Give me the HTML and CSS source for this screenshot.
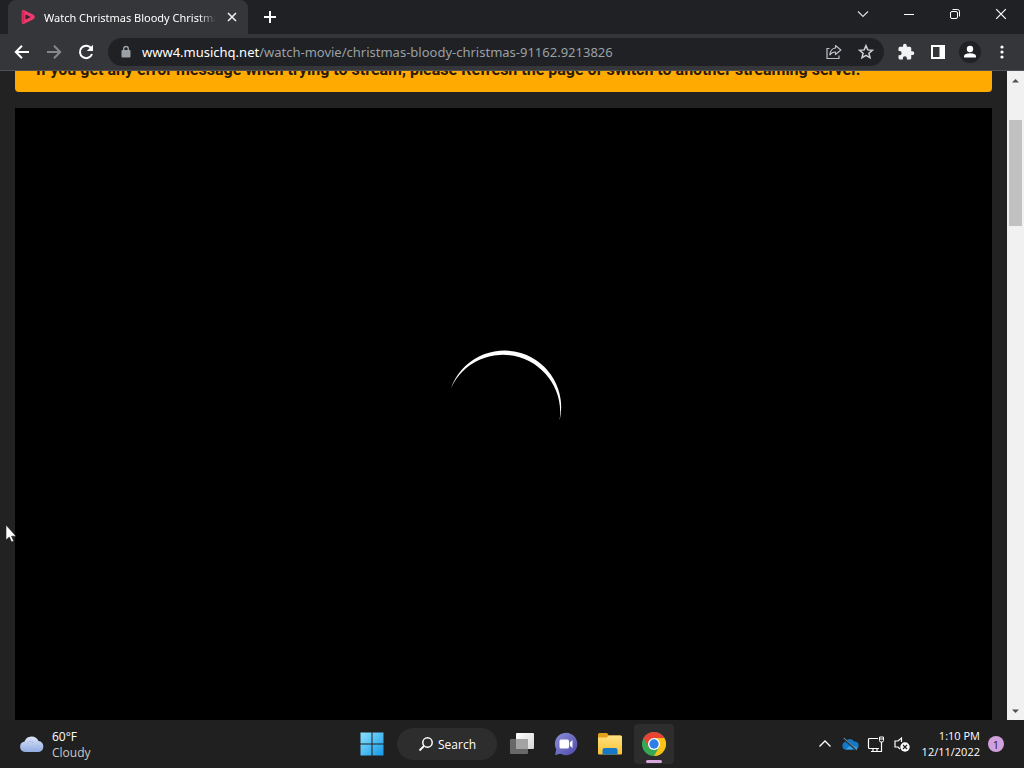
FILE: index.html
```html
<!DOCTYPE html>
<html lang="en">
<head>
  <meta charset="UTF-8" />
  <meta name="viewport" content="width=device-width, initial-scale=1.0"/>
  <title>Watch Christmas Bloody Christmas</title>
  <link rel="stylesheet" href="styles.css">
</head>
<body>
  <!-- Tab strip -->
  <header class="tabstrip">
    <div class="tab">
      <svg class="favicon" width="16" height="16" viewBox="0 0 16 16"><path d="M3.500 2.800 12.600 7.300a.8.8 0 0 1 0 1.400L3.500 13.200z" fill="none" stroke="#ee3a6c" stroke-width="3.600" stroke-linejoin="round"/><path d="M3.400 2.500v11" stroke="#c9285a" stroke-width="2"/><path d="M6 5.500 10.500 8 6 10.500z" fill="#3a2030"/></svg>
      <span class="tab-title">Watch Christmas Bloody Christmas</span>
      <button class="tab-close" aria-label="Close tab">
        <svg width="16" height="16" viewBox="0 0 16 16"><path d="M4 4l8 8M12 4l-8 8" stroke="#e8eaed" stroke-width="1.700"/></svg>
      </button>
    </div>
    <button class="new-tab" aria-label="New tab">
      <svg width="16" height="16" viewBox="0 0 16 16"><path d="M8 2v12M2 8h12" stroke="#fff" stroke-width="2"/></svg>
    </button>
    <div class="window-controls">
      <button aria-label="Search tabs"><svg width="16" height="16" viewBox="0 0 16 16"><path d="M3 5.500l5 5 5-5" fill="none" stroke="#dcdcdc" stroke-width="1.200"/></svg></button>
      <button aria-label="Minimize"><svg width="16" height="16" viewBox="0 0 16 16"><path d="M3 8.500h10" stroke="#fff"/></svg></button>
      <button aria-label="Restore"><svg width="16" height="16" viewBox="0 0 16 16"><rect x="3.500" y="5.500" width="7" height="7" rx="1.500" fill="none" stroke="#fff"/><path d="M5.500 3.500h5a2 2 0 0 1 2 2v5" fill="none" stroke="#fff"/></svg></button>
      <button aria-label="Close"><svg width="16" height="16" viewBox="0 0 16 16"><path d="M3.200 3.200l9.600 9.600M12.800 3.200l-9.600 9.600" stroke="#fff" stroke-width="1.200"/></svg></button>
    </div>
  </header>

  <!-- Toolbar -->
  <nav class="toolbar">
    <button aria-label="Back"><svg width="18" height="18" viewBox="0 0 18 18"><path d="M16 9H3M9 2.800 2.800 9 9 15.200" fill="none" stroke="#fff" stroke-width="2"/></svg></button>
    <button aria-label="Forward"><svg width="18" height="18" viewBox="0 0 18 18"><path d="M2 9h13M9 2.800 15.200 9 9 15.200" fill="none" stroke="#85878a" stroke-width="2"/></svg></button>
    <button aria-label="Reload"><svg width="18" height="18" viewBox="0 0 18 18"><path d="M14.400 5.600A6.200 6.200 0 1 0 15 11" fill="none" stroke="#fff" stroke-width="2"/><path d="M16 1.800V8H9.800z" fill="#fff"/></svg></button>
    <form class="omnibox">
      <svg width="12" height="14" viewBox="0 0 12 14"><rect x="1.500" y="5" width="9" height="7.500" rx="1" fill="#9aa0a6"/><path d="M3.700 5.500V3.800a2.300 2.300 0 0 1 4.600 0v1.700" fill="none" stroke="#9aa0a6" stroke-width="1.400"/></svg>
      <label class="host" for="address">www4.musichq.net</label>
      <input class="address" id="address" type="text" value="/watch-movie/christmas-bloody-christmas-91162.9213826" />
      <button type="button" aria-label="Share"><svg width="18" height="18" viewBox="0 0 18 18"><path d="M4.500 5.500H2v10h12v-3" fill="none" stroke="#bdc1c6" stroke-width="1.200"/><path d="M10.500 2.500 15.800 7l-5.300 4.500V9C8 9 6.200 9.800 4.800 11.800 5.200 8 7.200 5.400 10.500 5z" fill="none" stroke="#bdc1c6" stroke-width="1.200" stroke-linejoin="round"/></svg></button>
      <button type="button" aria-label="Bookmark this tab"><svg width="18" height="18" viewBox="0 0 18 18"><path d="M9 2.700l1.800 4.200 4.600.4-3.500 3 1.100 4.500L9 12.400l-4 2.400 1.100-4.500-3.500-3 4.600-.4z" fill="none" stroke="#d0d3d7" stroke-width="1.500"/></svg></button>
    </form>
    <button aria-label="Extensions"><svg width="18" height="18" viewBox="0 0 24 24"><path d="M20.500 11H19V7a2 2 0 0 0-2-2h-4V3.500a2.500 2.500 0 0 0-5 0V5H4a2 2 0 0 0-2 2v3.800h1.500a2.700 2.700 0 0 1 0 5.400H2V20a2 2 0 0 0 2 2h3.800v-1.500a2.700 2.700 0 0 1 5.400 0V22H17a2 2 0 0 0 2-2v-4h1.500a2.500 2.500 0 0 0 0-5z" fill="#f1f3f4"/></svg></button>
    <button aria-label="Side panel"><svg width="16" height="16" viewBox="0 0 16 16"><path fill-rule="evenodd" d="M1 1h14v14H1zM3 3v10h6.500V3z" fill="#fff"/></svg></button>
    <button class="profile" aria-label="Profile"><svg width="22" height="22" viewBox="0 0 22 22"><circle cx="11" cy="11" r="11" fill="#202124"/><circle cx="11" cy="8" r="3.200" fill="#fff"/><path d="M5 16.500v-1.300C5 13 9 12.200 11 12.200s6 .8 6 3v1.300z" fill="#fff"/></svg></button>
    <button aria-label="Menu"><svg width="16" height="16" viewBox="0 0 16 16"><circle cx="8" cy="3" r="1.600" fill="#fff"/><circle cx="8" cy="8" r="1.600" fill="#fff"/><circle cx="8" cy="13" r="1.600" fill="#fff"/></svg></button>
  </nav>

  <!-- Web page -->
  <div class="viewport">
    <main class="page">
      <div class="alert">If you get any error message when trying to stream, please Refresh the page or switch to another streaming server.</div>
      <div class="player">
        <svg class="spinner" width="116" height="116" viewBox="447 349 116 116"><path d="M452 388A56.780 56.780 0 0 1 560.500 421A57.260 57.260 0 0 0 452 388z" fill="#fff"/></svg>
      </div>
    </main>
    <div class="scrollbar">
      <svg width="17" height="17" viewBox="0 0 17 17"><path d="M5 11.500 8.500 8l3.500 3.500z" fill="#505050"/></svg>
      <div class="track"><div class="thumb"></div></div>
      <svg width="17" height="17" viewBox="0 0 17 17"><path d="M5 6.500 8.500 10 12 6.500z" fill="#505050"/></svg>
    </div>
  </div>

  <!-- Taskbar -->
  <footer class="taskbar">
    <button class="weather">
      <svg width="26" height="18" viewBox="0 0 26 18"><defs><linearGradient id="cloud" x1="0" y1="0" x2="0" y2="1"><stop offset="0" stop-color="#dce6fa"/><stop offset="1" stop-color="#91abe0"/></linearGradient></defs><path d="M6 17a5.300 5.300 0 0 1-.5-10.500A7.500 7.500 0 0 1 19.500 6 5.600 5.600 0 0 1 20 17z" fill="url(#cloud)"/><path d="M8 8.500C10 5.500 13 6 14.500 8" fill="none" stroke="#a9bde8"/></svg>
      <span class="weather-text"><span>60°F</span><span class="condition">Cloudy</span></span>
    </button>
    <div class="apps">
      <button class="app" aria-label="Start"><svg width="24" height="24" viewBox="0 0 24 24"><defs><linearGradient id="win" x1="0" y1="0" x2="1" y2="1"><stop offset="0" stop-color="#8be2ff"/><stop offset="1" stop-color="#1498e6"/></linearGradient></defs><path d="M.5.500h11v11H.5zM12.500.500h11v11h-11zM.5 12.500h11v11H.5zM12.500 12.500h11v11h-11z" fill="url(#win)"/></svg></button>
      <button class="search"><svg width="16" height="16" viewBox="0 0 16 16"><circle cx="9.500" cy="6.500" r="4.700" fill="none" stroke="#fff" stroke-width="1.500"/><path d="M6 10l-4.500 4.500" stroke="#fff" stroke-width="1.800"/></svg>Search</button>
      <button class="app" aria-label="Task view"><svg width="26" height="24" viewBox="0 0 26 24"><defs><linearGradient id="pane" x1="0" y1="0" x2="1" y2="1"><stop offset="0" stop-color="#fff"/><stop offset="1" stop-color="#d6d6d6"/></linearGradient></defs><rect x="1" y="7" width="18" height="15" rx="1" fill="#686868"/><rect x="7" y="1" width="18" height="16" rx="1" fill="url(#pane)"/><path d="M7 7h12v10H7z" fill="#a3a3a3"/></svg></button>
      <button class="app" aria-label="Chat"><svg width="24" height="24" viewBox="0 0 24 24"><defs><linearGradient id="chat" x1="0" y1="0" x2="1" y2="1"><stop offset="0" stop-color="#8c91d8"/><stop offset="1" stop-color="#4f48ac"/></linearGradient></defs><path d="M12 .8a11.200 11.200 0 1 1-5.300 21L1 23l1.300-5.500A11.200 11.200 0 0 1 12 .8z" fill="url(#chat)"/><rect x="5.500" y="7.500" width="9.500" height="9" rx="1.500" fill="#fff"/><path d="M15.800 10.500 18.500 8v8l-2.700-2.500z" fill="#fff"/></svg></button>
      <button class="app" aria-label="File Explorer"><svg width="26" height="24" viewBox="0 0 26 24"><defs><linearGradient id="folder" x1="0" y1="0" x2="0" y2="1"><stop offset="0" stop-color="#ffe083"/><stop offset="1" stop-color="#fbc22f"/></linearGradient></defs><path d="M1 2.500A1.500 1.500 0 0 1 2.500 1H10l2 2.500h11.500A1.500 1.500 0 0 1 25 5v6H1z" fill="#e0a21b"/><path d="M1 5.500h8.500l2.500-2h11.500A1.500 1.500 0 0 1 25 5v16.500a1 1 0 0 1-1 1H2a1 1 0 0 1-1-1z" fill="url(#folder)"/><path d="M5.500 22.500V18A2 2 0 0 1 7.500 16h11a2 2 0 0 1 2 2v4.500z" fill="#1878c8"/></svg></button>
      <button class="app active" aria-label="Google Chrome"><svg width="26" height="26" viewBox="0 0 26 26"><circle cx="13" cy="13" r="12" fill="#34a853"/><path d="M2.600 7A12 12 0 0 1 23.400 7H13l-5.200 9z" fill="#ea4335"/><path d="M23.400 7A12 12 0 0 1 13 25l5.200-9L13 7z" fill="#fbc116"/><circle cx="13" cy="13" r="6" fill="#fff"/><circle cx="13" cy="13" r="4.700" fill="#2f7de9"/></svg></button>
    </div>
    <div class="tray">
      <button aria-label="Show hidden icons"><svg width="16" height="16" viewBox="0 0 16 16"><path d="M2.500 10.500 8 5l5.500 5.500" fill="none" stroke="#fff" stroke-width="1.300"/></svg></button>
      <button aria-label="OneDrive"><svg width="18" height="16" viewBox="0 0 18 16"><path d="M4.500 13.500a3.800 3.800 0 0 1-.3-7.400 5 5 0 0 1 9-.6 4 4 0 0 1 .8 8z" fill="#1479c9"/><path d="M4.500 13.500 10 9l6.500 2.500a3 3 0 0 1-2.500 2z" fill="#34a5ea"/><path d="M2 2l13 12" stroke="#203848" stroke-width="2"/><path d="M3 2l13 12" stroke="#75909f"/></svg></button>
      <button aria-label="Network"><svg width="18" height="18" viewBox="0 0 18 18"><path d="M11 3.500H2.500a1 1 0 0 0-1 1v8a1 1 0 0 0 1 1H12M6 13.500v3M10 13.500v3M4 16.500h8M14.500 7v9.500H12" fill="none" stroke="#fff" stroke-width="1.200"/><path d="M12.500 2h4v3.500a1.500 1.500 0 0 1-1.500 1.500h-1a1.500 1.500 0 0 1-1.500-1.500zM12.500 4h4" fill="none" stroke="#fff"/></svg></button>
      <button aria-label="Volume"><svg width="18" height="18" viewBox="0 0 18 18"><path d="M8.500 7V3L5 6H2v6h3l2 2" fill="none" stroke="#fff" stroke-width="1.200"/><circle cx="12" cy="12" r="4.700" fill="#fff"/><path d="M10 10l4 4M14 10l-4 4" stroke="#202020" stroke-width="1.200"/></svg></button>
      <button class="clock"><span>1:10 PM</span><span>12/11/2022</span></button>
      <button class="notifications" aria-label="Notifications">1</button>
    </div>
  </footer>

  <svg class="cursor" width="12" height="19" viewBox="0 0 12 19"><path d="M1 1v15l3.300-3L6.500 18l2.200-1-2.200-4.800H11z" fill="#fff" stroke="#222" stroke-width=".6"/></svg>
</body>
</html>
```
FILE: styles.css
```css
* {
  box-sizing: border-box;
}
body {
  display: flex;
  flex-direction: column;
  height: 100vh;
  margin: 0;
  overflow: hidden;
  background-color: #222;
  color: #fff;
  font-family: "Open Sans", "Noto Sans", sans-serif;
  font-size: 12px;
}
button {
  display: flex;
  align-items: center;
  justify-content: center;
  flex: none;
  padding: 0;
  border: 0;
  background: none;
  color: inherit;
  font: inherit;
}
svg {
  display: block;
  flex: none;
}

/* Tab strip */
.tabstrip {
  display: flex;
  height: 34px;
  background-color: #202124;
}
.tab {
  display: flex;
  align-items: center;
  width: 240px;
  margin-left: 8px;
  padding: 0 8px 0 12px;
  border-radius: 8px 8px 0 0;
  background-color: #35363a;
}
.tab-title {
  flex: 1;
  margin: 0 8px;
  overflow: hidden;
  white-space: nowrap;
  font-family: "Noto Sans", sans-serif;
  font-size: 11px;
  mask-image: linear-gradient(to right, #000 90%, transparent);
}
.tab-close {
  width: 16px;
}
.new-tab {
  width: 28px;
  margin-left: 8px;
}
.window-controls {
  display: flex;
  margin-left: auto;
}
.window-controls button {
  width: 46px;
  height: 28px;
}

/* Toolbar */
.toolbar {
  display: flex;
  align-items: center;
  gap: 4px;
  height: 37px;
  padding: 0 8px;
  border-bottom: 1px solid #505154;
  background-color: #35363a;
}
.toolbar button {
  width: 28px;
  height: 28px;
}
.omnibox {
  display: flex;
  flex: 1;
  align-items: center;
  gap: 4px;
  min-width: 0;
  height: 28px;
  margin: 0 4px;
  padding: 0 4px 0 12px;
  border-radius: 14px;
  background-color: #202124;
  font-family: "Noto Sans", sans-serif;
  font-size: 13px;
}
.host {
  margin-left: 6px;
}
.address {
  flex: 1;
  min-width: 0;
  margin-left: -4px;
  padding: 0;
  border: 0;
  outline: 0;
  background: none;
  color: #9aa0a6;
  font: inherit;
}

/* Web page */
.viewport {
  display: flex;
  flex: 1;
  min-height: 0;
}
.page {
  display: flex;
  flex: 1;
  flex-direction: column;
  gap: 16px;
  min-width: 0;
  padding: 0 15px;
  overflow: hidden;
}
.alert {
  flex: none;
  margin-top: -23px;
  padding: 10px 21px;
  border-radius: 4px;
  background-color: #ffaa00;
  color: #2c1a08;
  font-family: Roboto, sans-serif;
  font-size: 16px;
  font-weight: 700;
  line-height: 24px;
  white-space: nowrap;
}
.player {
  display: flex;
  flex: 1;
  align-items: center;
  justify-content: center;
  padding-bottom: 14px;
  background-color: #000;
}
.scrollbar {
  display: flex;
  flex-direction: column;
  width: 17px;
  background-color: #f1f1f1;
}
.track {
  flex: 1;
  padding: 32px 2px 0;
}
.thumb {
  height: 106px;
  background-color: #c1c1c1;
}

/* Taskbar */
.taskbar {
  display: grid;
  grid-template-columns: 1fr auto 1fr;
  align-items: center;
  height: 48px;
  padding-left: 2px;
  background-color: #202020;
}
.weather {
  justify-self: start;
  gap: 7px;
  margin-left: 17px;
  line-height: 16px;
  text-align: left;
}
.weather-text {
  display: grid;
  padding-top: 2px;
}
.condition {
  color: #c8c8c8;
}
.apps {
  display: flex;
  align-items: center;
  gap: 4px;
}
.app {
  position: relative;
  width: 40px;
  height: 40px;
  border-radius: 4px;
}
.app.active {
  background-color: #2d2d2d;
}
.app.active::after {
  content: "";
  position: absolute;
  bottom: 1px;
  left: 12px;
  width: 16px;
  height: 3px;
  border-radius: 2px;
  background-color: #d9a6dc;
}
.search {
  gap: 4px;
  width: 100px;
  height: 32px;
  margin: 0 1px;
  border-radius: 16px;
  background-color: #2d2d2d;
}
.tray {
  display: flex;
  align-items: center;
  justify-self: end;
  gap: 8px;
  margin-right: 20px;
}
.clock {
  display: grid;
  margin-left: 3px;
  font-size: 11px;
  line-height: 16px;
  text-align: right;
}
.notifications {
  width: 16px;
  height: 16px;
  border-radius: 50%;
  background-color: #d2a0dc;
  color: #222;
  font-size: 11px;
}

.cursor {
  position: absolute;
  top: 524px;
  left: 5px;
}
```
